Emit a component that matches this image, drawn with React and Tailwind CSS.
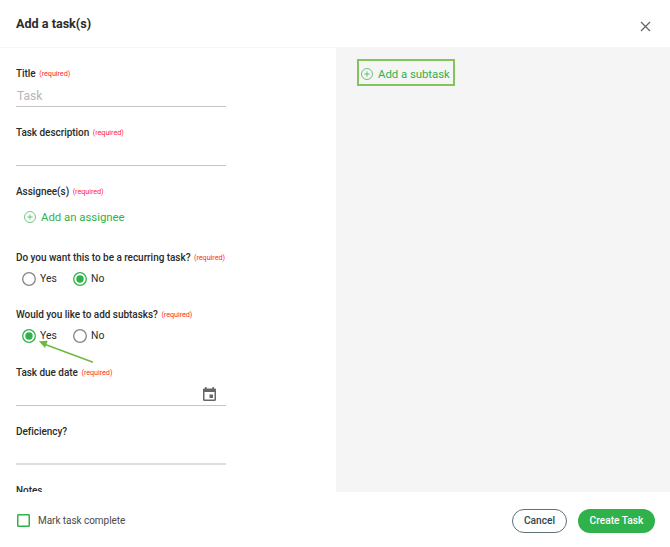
import { useState } from "react";

function Label({ children, required }) {
  return (
    <div className="flex h-4 items-center whitespace-nowrap">
      <span className="text-[10px] font-medium leading-4 tracking-[-0.04px] text-[#2b2b2b]">
        {children}
      </span>
      {required && (
        <span className="ml-[3.6px] text-[7.3px] leading-4 tracking-[-0.08px] text-[#ff2a1f]">
          (required)
        </span>
      )}
    </div>
  );
}

function PlusCircle() {
  return (
    <svg
      className="h-3 w-3 shrink-0"
      viewBox="0 0 12 12"
      fill="none"
      stroke="#2fb24c"
      strokeWidth="0.7"
    >
      <circle cx="6" cy="6" r="5.5" />
      <path d="M6 3.3v5.4M3.3 6h5.4" />
    </svg>
  );
}

function Radio({ label, checked, onClick }) {
  return (
    <button
      onClick={onClick}
      className="flex w-[51px] items-center text-[10.4px] leading-4 text-[#2b2b2b]"
    >
      <svg className="mr-[3.6px] h-3.5 w-3.5 shrink-0" viewBox="0 0 14 14">
        <circle
          cx="7"
          cy="7"
          r="6.3"
          fill="none"
          stroke={checked ? "#2fb24c" : "#858585"}
          strokeWidth="1.3"
        />
        {checked && <circle cx="7" cy="7" r="3.7" fill="#2fb24c" />}
      </svg>
      {label}
    </button>
  );
}

function YesNo({ value, onChange }) {
  return (
    <div className="mt-[5px] flex pl-[6.4px]">
      <Radio label="Yes" checked={value} onClick={() => onChange(true)} />
      <Radio label="No" checked={!value} onClick={() => onChange(false)} />
    </div>
  );
}

function App() {
  const [recurring, setRecurring] = useState(false);
  const [subtasks, setSubtasks] = useState(true);

  return (
    <div className="flex h-[547px] w-[670px] flex-col overflow-hidden bg-white font-['Roboto',sans-serif]">
      <header className="flex h-12 shrink-0 items-center justify-between border-b border-[#f5f5f5] pl-4 pr-[19px]">
        <h1 className="text-[12.6px] font-bold leading-4 text-[#2b2b2b]">
          Add a task(s)
        </h1>
        <svg
          className="mt-1.5 h-[11px] w-[11px]"
          viewBox="0 0 11 11"
          stroke="#666"
          strokeWidth="1.3"
        >
          <path d="M1 1l9 9M10 1l-9 9" />
        </svg>
      </header>

      <main className="flex h-[444px] shrink-0 overflow-hidden">
        <section className="w-[336px] shrink-0 pl-4 pt-[18px]">
          <div className="h-[59px]">
            <Label required>Title</Label>
            <input
              placeholder="Task"
              className="block h-[25px] w-[210px] border-b border-[#c4c4c4] pl-px pt-[3px] text-[12px] leading-4 outline-none placeholder:text-[#b5b5b5]"
            />
          </div>
          <div className="h-[59px]">
            <Label required>Task description</Label>
            <input className="block h-[25px] w-[210px] border-b border-[#c4c4c4] text-[12px] outline-none" />
          </div>
          <div className="h-[66px]">
            <Label required>Assignee(s)</Label>
            <button className="mt-[9px] flex items-center gap-[5px] pl-2 text-[11.4px] leading-4 tracking-[-0.02px] text-[#2fb24c]">
              <PlusCircle />
              Add an assignee
            </button>
          </div>
          <div className="h-[57.4px]">
            <Label required>Do you want this to be a recurring task?</Label>
            <YesNo value={recurring} onChange={setRecurring} />
          </div>
          <div className="relative h-[57.6px]">
            <Label required>Would you like to add subtasks?</Label>
            <YesNo value={subtasks} onChange={setSubtasks} />
            {/* hint arrow pointing at the "Yes" option */}
            <svg
              className="pointer-events-none absolute left-[22px] top-[33px] h-6 w-14"
              viewBox="0 0 56 24"
            >
              <path d="M6 4L55 22.3" stroke="#6fb93f" strokeWidth="1.6" />
              <path d="M.9 1.2l8.800-.4-2.700 7.200z" fill="#6fb93f" />
            </svg>
          </div>
          <div className="h-[59px]">
            <Label required>Task due date</Label>
            <div className="flex h-[25px] w-[210px] items-center justify-end border-b border-[#c4c4c4] pr-2.5 pt-[3px]">
              <svg className="h-3.5 w-[13px]" viewBox="0 0 13 14">
                <path
                  fill="#666"
                  fillRule="evenodd"
                  d="M2 0h1.600v1.400h5.800V0H11v1.400h.8c.7 0 1.200.5 1.200 1.200v10.200c0 .7-.5 1.200-1.200 1.200H1.200C.5 14 0 13.500 0 12.800V2.600c0-.7.5-1.200 1.200-1.200H2zM1.500 5v7.500h10V5zM6.500 7.500H10V11H6.500z"
                />
              </svg>
            </div>
          </div>
          <div className="h-[59px]">
            <Label>Deficiency?</Label>
            <input className="block h-[25px] w-[210px] border-b-2 border-[#dedede] text-[12px] outline-none" />
          </div>
          <Label>Notes</Label>
        </section>

        <aside className="flex-1 bg-[#f5f5f5] pl-[21px] pt-[11px]">
          <button className="flex h-[27px] w-[98px] items-center gap-[5px] whitespace-nowrap border-2 border-[#83c35b] pl-0.5 pt-0.5 text-[11.4px] leading-4 tracking-[-0.04px] text-[#2fb24c]">
            <PlusCircle />
            Add a subtask
          </button>
        </aside>
      </main>

      <footer className="flex flex-1 items-center pl-[17px] pr-[15px] pt-0.5">
        <label className="flex items-center gap-2 text-[10px] leading-4 tracking-[-0.05px] text-[#4a4a4a]">
          <span className="h-[13px] w-[13px] rounded-[1px] border border-[#2fb24c] shadow-[inset_0_0_0_0.5px_#2fb24c]" />
          Mark task complete
        </label>
        <button className="ml-auto h-6 w-[55px] rounded-full border border-[#5f7078] text-[10.2px] font-medium text-[#30444e]">
          Cancel
        </button>
        <button className="ml-[11px] h-6 w-[77px] rounded-full bg-[#2fb24c] text-[10.2px] font-medium text-white">
          Create Task
        </button>
      </footer>
    </div>
  );
}

export default App;
